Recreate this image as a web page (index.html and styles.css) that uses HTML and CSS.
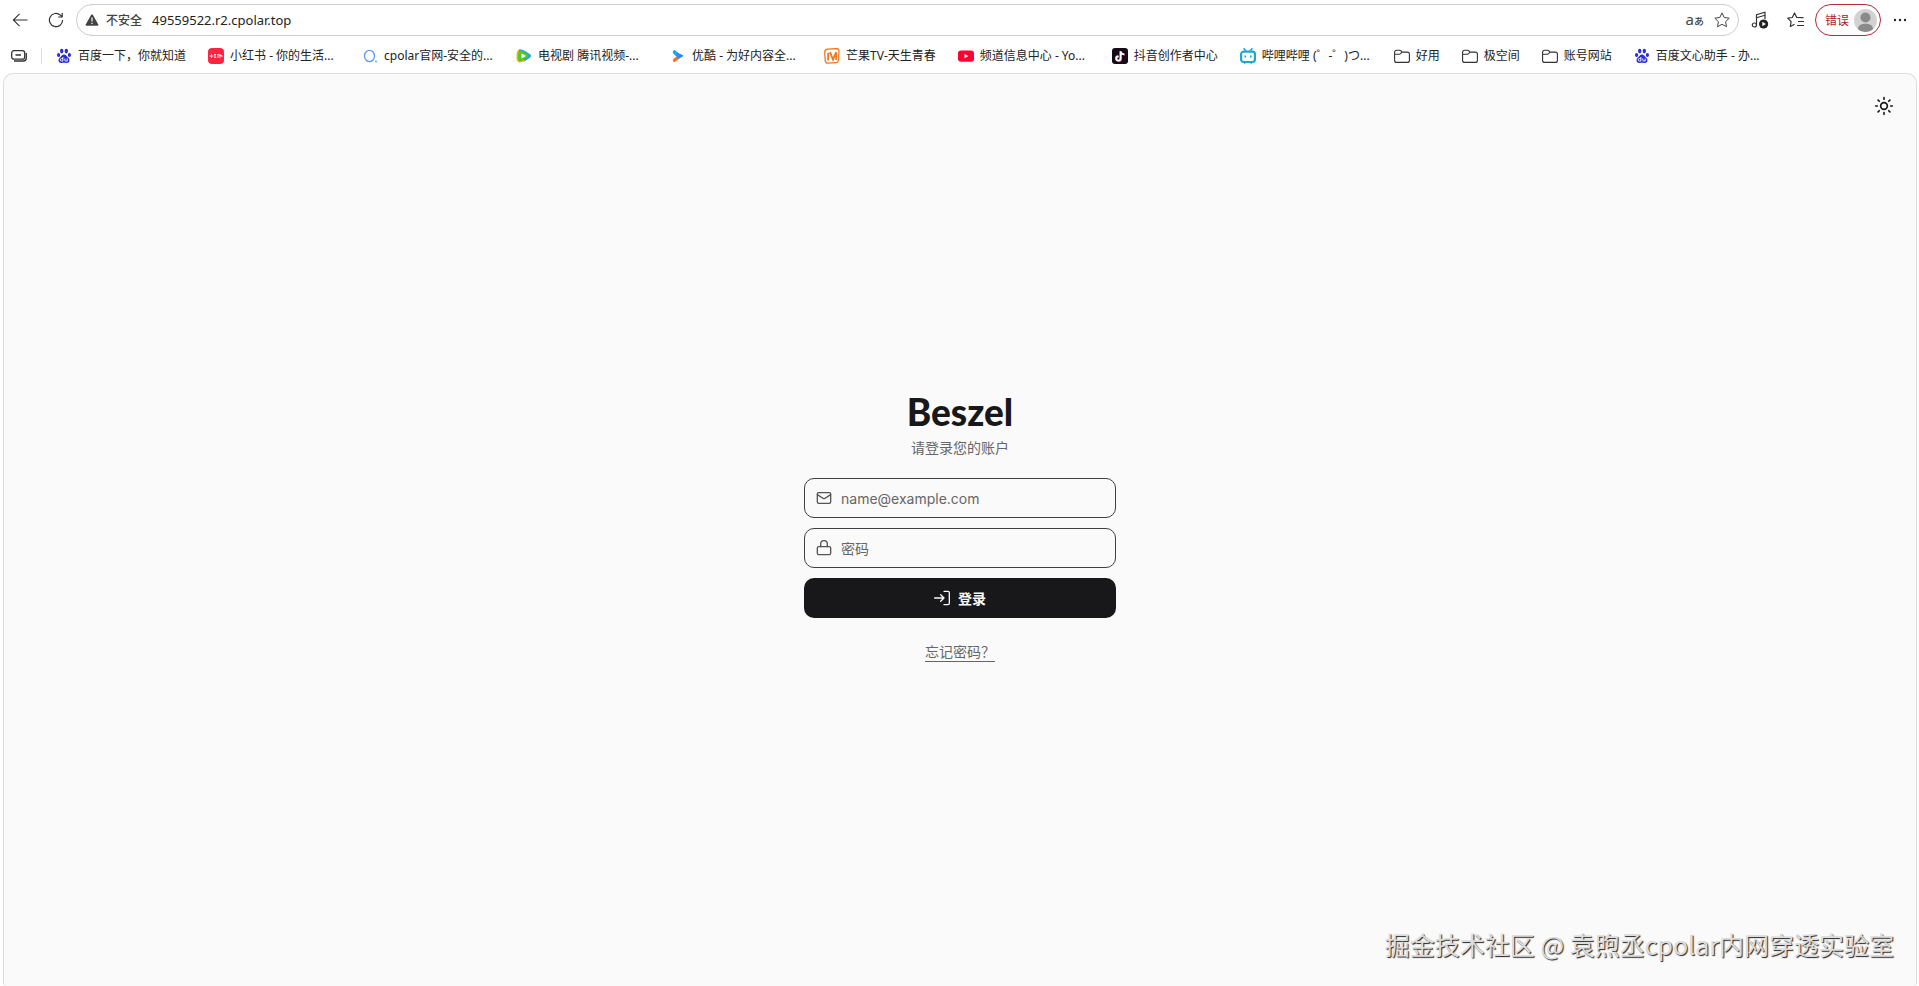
FILE: index.html
```html
<!DOCTYPE html>
<html lang="zh-CN">
<head>
  <meta charset="UTF-8">
  <meta name="viewport" content="width=device-width, initial-scale=1">
  <title>Beszel - 登录</title>
  <link rel="stylesheet" href="styles.css">
</head>
<body>
  <!-- Shared icons -->
  <svg class="sprite" aria-hidden="true">
    <symbol id="icon-paw" viewBox="0 0 16 16">
      <g fill="#2a2ed8">
        <ellipse cx="5.7" cy="3.1" rx="1.7" ry="2.3"/>
        <ellipse cx="10.3" cy="3.1" rx="1.7" ry="2.3"/>
        <ellipse cx="2.6" cy="6.9" rx="1.6" ry="2"/>
        <ellipse cx="13.4" cy="6.9" rx="1.6" ry="2"/>
        <path d="M8 6.4c-2 0-2.500 1.800-4 3.100-1.300 1.100-1.700 2.200-1.400 3.500.4 1.700 1.800 2.100 3.200 1.900 1.500-.2 2.900-.2 4.400 0 1.400.2 2.800-.2 3.200-1.900.3-1.300-.1-2.400-1.400-3.500-1.500-1.300-2-3.100-4-3.100z"/>
      </g>
      <path d="M6.900 9v4H5.500a1.200 1.200 0 0 1 0-2.500h1.400M8.800 10.500v1.600q0 .9.900.9h1.500v-2.500" fill="none" stroke="#fff" stroke-width=".9"/>
    </symbol>
    <symbol id="icon-folder" viewBox="0 0 16 16">
      <path d="M.6 4.200a2 2 0 0 1 2-2h2.900c.5 0 .8.200 1.200.5l1.400 1.400h5.300a2 2 0 0 1 2 2v6.300a2 2 0 0 1-2 2H2.600a2 2 0 0 1-2-2zM.6 6.200h4.900c.5 0 .8-.2 1.100-.5L8.100 4.100" fill="none" stroke="#333" stroke-width="1.100"/>
    </symbol>
  </svg>

  <header class="browser">
    <div class="toolbar">
      <button class="tool-button" aria-label="返回">
        <svg width="16" height="16" viewBox="0 0 18 18"><path d="M17.500 9H1.500M8.500 2L1.500 9l7 7" fill="none" stroke="#333" stroke-width="1.200"/></svg>
      </button>
      <button class="tool-button" aria-label="刷新">
        <svg width="16" height="16" viewBox="0 0 16 16"><path d="M14.600 8A6.600 6.600 0 1 1 12.400 3.100L14.200 4.800M14.200 1v4h-4" fill="none" stroke="#333" stroke-width="1.200"/></svg>
      </button>
      <div class="address-bar">
        <svg width="14" height="12" viewBox="0 0 14 12"><path d="M6.200.7Q7-.4 7.800.7l5.500 9.700q.5 1.300-.8 1.300h-11q-1.300 0-.8-1.300z" fill="#444"/><path d="M7 3.500v4M7 8.800V10" stroke="#fff" stroke-width="1.200"/></svg>
        <span class="insecure">不安全</span>
        <input class="url" type="text" aria-label="地址" value="49559522.r2.cpolar.top">
        <button class="tool-button translate" aria-label="翻译"><span>a</span><small>あ</small></button>
        <button class="tool-button" aria-label="收藏">
          <svg width="16" height="16" viewBox="0 0 16 16"><path d="M8 .9l2.200 4.600 5 .7-3.600 3.500.9 5L8 12.300l-4.500 2.400.9-5L.8 6.200l5-.7z" fill="none" stroke="#444" stroke-linejoin="round"/></svg>
        </button>
      </div>
      <button class="tool-button" aria-label="媒体">
        <svg width="18" height="18" viewBox="0 0 18 18"><path d="M5.500 14V3.800L14 1.200V8M5.500 6.800L14 4.200" fill="none" stroke="#333" stroke-width="1.200"/><ellipse cx="3.400" cy="14" rx="2.100" ry="2" fill="none" stroke="#333" stroke-width="1.200"/><circle cx="12.600" cy="13" r="4.600" fill="#222"/><path d="M11.300 10.800v4.400l3.600-2.200z" fill="#fff"/></svg>
      </button>
      <button class="tool-button" aria-label="收藏夹">
        <svg width="18" height="16" viewBox="0 0 18 16"><path d="M16.500 5.600L9.700 5.500 7.500 1 5.300 5.500l-4.600.7 3.400 3.400-.8 4.900 4.200-2.200M11 9.500h6M10 13.500h7" fill="none" stroke="#333" stroke-width="1.200" stroke-linejoin="round"/></svg>
      </button>
      <button class="profile">
        <span>错误</span>
        <svg width="23" height="23" viewBox="0 0 23 23"><circle cx="11.500" cy="11.500" r="11.500" fill="#d2d2d2"/><circle cx="11.500" cy="8.500" r="5" fill="#8a8a8a"/><path d="M4 20.200c0-3.700 3.300-5.400 7.500-5.400s7.500 1.700 7.500 5.400a11.500 11.500 0 0 1-15 0z" fill="#8a8a8a"/></svg>
      </button>
      <button class="tool-button" aria-label="设置及其他">
        <svg width="14" height="4" viewBox="0 0 14 4"><g fill="#222"><circle cx="2" cy="2" r="1.200"/><circle cx="7" cy="2" r="1.200"/><circle cx="12" cy="2" r="1.200"/></g></svg>
      </button>
    </div>

    <nav class="bookmarks">
      <button class="tool-button workspaces" aria-label="工作区">
        <svg width="16" height="12" viewBox="0 0 16 12"><rect x=".7" y=".7" width="13" height="8.400" rx="2.200" fill="none" stroke="#333" stroke-width="1.300"/><path d="M4.500 5h5.500M3 11h9.500q2.800 0 2.800-3V3" fill="none" stroke="#333" stroke-width="1.300"/></svg>
      </button>
      <a class="bookmark" href="#"><svg viewBox="0 0 16 16"><use href="#icon-paw"/></svg><span>百度一下，你就知道</span></a>
      <a class="bookmark long" href="#">
        <svg viewBox="0 0 16 16"><rect width="16" height="16" rx="4" fill="#ff2442"/><path d="M3.500 6v4M2.300 7.200v1.600M4.700 7.200v1.600M6 6.500h2M7 6.500v3M6 9.500h2.200M9 6.500h2M10 6v4M12 6v4M11.500 7.500H14V9" fill="none" stroke="#fff" stroke-width=".8"/></svg>
        <span>小红书 - 你的生活...</span>
      </a>
      <a class="bookmark long" href="#">
        <svg viewBox="0 0 16 16"><ellipse cx="7.500" cy="8" rx="5" ry="5.700" fill="none" stroke="#5b9df0" stroke-width="1.300"/><circle cx="14" cy="13.500" r=".9" fill="#5b9df0"/></svg>
        <span>cpolar官网-安全的...</span>
      </a>
      <a class="bookmark long" href="#">
        <svg viewBox="0 0 16 16"><path d="M3 1.400Q5 .8 9 3l5 3.200q2.200 1.800 0 3.500L8 13.800 3 8z" fill="#1ca3f4"/><path d="M3 1.400Q.8 2 .5 7.500T2.500 14q1 1.500 6.500-1.300L4.500 8z" fill="#ffa51f"/><path d="M3.400 2.800Q4.500 2 8.500 4.300t4 2.700q1 .9-.3 1.800Q5 14 3.400 13.200T2 8t1.400-5.200z" fill="#52c91e"/><path d="M5.500 5.200v5.400L10 8z" fill="#fff"/></svg>
        <span>电视剧 腾讯视频-...</span>
      </a>
      <a class="bookmark long" href="#">
        <svg viewBox="0 0 16 16"><path d="M4.500 4l3 3.200" stroke="#18a9f5" stroke-width="3.600" stroke-linecap="round"/><path d="M4.500 12.200L8 9.500" stroke="#ff6b24" stroke-width="3.300" stroke-linecap="round"/><path d="M6.500 4.300L12.700 7q.9.700 0 1.400l-4 2.600Q6 8 6.500 4.300z" fill="#248ff5"/></svg>
        <span>优酷 - 为好内容全...</span>
      </a>
      <a class="bookmark" href="#">
        <svg viewBox="0 0 16 16"><path d="M4 1.200L12.500.5q2.500 0 2.500 2.500l-.5 9q-.3 2.500-2.700 2.600L4 15.200q-2.500 0-2.800-2.500L.7 4Q.7 1.500 4 1.200z" fill="#fff" stroke="#f17922" stroke-width="1.300"/><path d="M4.200 12.500V4.700M6 4.200l3 7.300 3.200-7.300v7.800" fill="none" stroke="#f17922" stroke-width="1.900"/></svg>
        <span>芒果TV-天生青春</span>
      </a>
      <a class="bookmark long" href="#">
        <svg viewBox="0 0 16 16"><rect y="2.400" width="16" height="11.400" rx="3" fill="#ff0033"/><path d="M6.500 5.900v4.400L10.300 8.100z" fill="#fff"/></svg>
        <span>频道信息中心 - Yo...</span>
      </a>
      <a class="bookmark" href="#">
        <svg viewBox="0 0 16 16"><rect width="16" height="16" rx="3" fill="#170b1a"/><g fill="none" stroke-width="1.600"><path d="M8.200 3v7.200a2.200 2.200 0 1 1-2.200-2.200M8.200 3q.4 2.800 3.600 3" stroke="#25f4ee"/><path d="M9.200 3.800V11a2.200 2.200 0 1 1-2.200-2.200M9.200 3.800q.4 2.800 3.600 3" stroke="#fe2c55"/><path d="M8.700 3.400v7.200a2.200 2.200 0 1 1-2.200-2.200M8.700 3.400q.4 2.800 3.600 3" stroke="#fff"/></g></svg>
        <span>抖音创作者中心</span>
      </a>
      <a class="bookmark long" href="#">
        <svg viewBox="0 0 16 16"><path d="M4 .8l2.200 2.500M12 .8L9.800 3.300" stroke="#20a6d0" stroke-width="1.600" stroke-linecap="round"/><rect x="1.100" y="3.700" width="13.800" height="10.300" rx="2.400" fill="#fff" stroke="#20a6d0" stroke-width="2.200"/><path d="M5.200 7.500v2M10.800 7.500v2M4 15h1.500M10.500 15H12" stroke="#20a6d0" stroke-width="1.600"/></svg>
        <span>哔哩哔哩 (゜-゜)つ...</span>
      </a>
      <a class="bookmark" href="#"><svg viewBox="0 0 16 16"><use href="#icon-folder"/></svg><span>好用</span></a>
      <a class="bookmark" href="#"><svg viewBox="0 0 16 16"><use href="#icon-folder"/></svg><span>极空间</span></a>
      <a class="bookmark" href="#"><svg viewBox="0 0 16 16"><use href="#icon-folder"/></svg><span>账号网站</span></a>
      <a class="bookmark long" href="#"><svg viewBox="0 0 16 16"><use href="#icon-paw"/></svg><span>百度文心助手 - 办...</span></a>
    </nav>
  </header>

  <main class="page">
    <button class="theme-toggle" aria-label="切换主题">
      <svg width="20" height="20" viewBox="0 0 24 24" fill="none" stroke="#18181b" stroke-width="2" stroke-linecap="round"><circle cx="12" cy="12" r="4"/><path d="M12 2v2M12 20v2M4.930 4.930l1.410 1.410M17.660 17.660l1.410 1.410M2 12h2M20 12h2M6.340 17.660l-1.410 1.410M19.070 4.930l-1.410 1.410"/></svg>
    </button>

    <div class="login">
      <h1>Beszel</h1>
      <p class="subtitle">请登录您的账户</p>
      <form class="login-form">
        <label class="field">
          <svg width="16" height="16" viewBox="0 0 24 24" fill="none" stroke="currentColor" stroke-width="2" stroke-linecap="round" stroke-linejoin="round"><rect x="2" y="4" width="20" height="16" rx="2"/><path d="M22 7l-8.970 5.700a1.940 1.940 0 0 1-2.060 0L2 7"/></svg>
          <input type="email" name="email" placeholder="name@example.com" aria-label="邮箱">
        </label>
        <label class="field">
          <svg width="16" height="16" viewBox="0 0 24 24" fill="none" stroke="currentColor" stroke-width="2" stroke-linecap="round" stroke-linejoin="round"><rect x="2" y="10" width="20" height="12" rx="2"/><path d="M7 10V6a5 5 0 0 1 10 0v4"/></svg>
          <input type="password" name="password" placeholder="密码" aria-label="密码">
        </label>
        <button class="submit" type="submit">
          <svg width="16" height="16" viewBox="0 0 24 24" fill="none" stroke="currentColor" stroke-width="2" stroke-linecap="round" stroke-linejoin="round"><path d="M15 2h6a2 2 0 0 1 2 2v16a2 2 0 0 1-2 2h-6M10 17l5-5-5-5M15 12H1"/></svg>
          <span>登录</span>
        </button>
      </form>
      <a class="forgot" href="#">忘记密码？</a>
    </div>

    <p class="watermark">掘金技术社区 @ 袁煦丞cpolar内网穿透实验室</p>
  </main>
</body>
</html>
```
FILE: styles.css
```css
* {
  box-sizing: border-box;
}

body {
  margin: 0;
  min-height: 100vh;
  display: flex;
  flex-direction: column;
  background-color: #fff;
  color: #222;
  font-family: "Noto Sans", "Noto Sans CJK SC", sans-serif;
  font-size: 12px;
}

button,
input {
  font: inherit;
  color: inherit;
  border: none;
  background: none;
  padding: 0;
  margin: 0;
}

button {
  cursor: pointer;
}

svg {
  display: block;
  flex-shrink: 0;
}

.sprite {
  position: absolute;
  width: 0;
  height: 0;
}

/* Browser bars */
.toolbar {
  display: flex;
  align-items: center;
  gap: 18px;
  padding: 4px 12px 0;
}

.tool-button {
  display: flex;
  align-items: center;
  justify-content: center;
}

.toolbar > .tool-button:nth-child(2) {
  margin-left: 2px;
}

.address-bar {
  flex: 1;
  display: flex;
  align-items: center;
  height: 32px;
  margin: 0 -6px;
  padding: 0 8px;
  border: 1px solid #ccc;
  border-radius: 16px;
}

.insecure {
  margin: 0 10px 0 7px;
  color: #444;
  font-weight: 500;
}

.url {
  flex: 1;
  min-width: 0;
  font-size: 13px;
}

.translate {
  margin-right: 10px;
  align-items: baseline;
  color: #444;
  font-size: 15px;
  line-height: 16px;
}

.translate small {
  font-family: "Noto Sans CJK JP", sans-serif;
  font-size: 10px;
  font-weight: 500;
}

.profile {
  display: flex;
  align-items: center;
  gap: 5px;
  height: 32px;
  margin: 0 -6px 0 -8px;
  padding: 0 3px 0 9px;
  border: 1px solid #b02a37;
  border-radius: 16px;
  color: #b0202f;
}

.bookmarks {
  display: flex;
  align-items: center;
  gap: 22px;
  height: 37px;
  padding: 2px 0 0 11px;
  overflow: hidden;
}

.workspaces {
  height: 16px;
  padding-right: 14px;
  margin-right: -8px;
  border-right: 1px solid #ddd;
}

.bookmark {
  display: flex;
  align-items: center;
  gap: 6px;
  color: #222;
  line-height: 16px;
  text-decoration: none;
  white-space: nowrap;
}

.bookmark svg {
  width: 16px;
  height: 16px;
}

.long span {
  width: 110px;
}

/* Login page */
.page {
  position: relative;
  flex: 1;
  display: flex;
  align-items: center;
  justify-content: center;
  margin: 0 2px 0 3px;
  padding-bottom: 4px;
  border: 1px solid #ddd;
  border-bottom: none;
  border-radius: 10px 10px 4px 4px;
  background-color: #fafafa;
  color: #18181b;
  font-family: Inter, "Noto Sans CJK SC", sans-serif;
  font-size: 14px;
}

.theme-toggle {
  position: absolute;
  top: 12px;
  right: 12px;
  display: flex;
  align-items: center;
  justify-content: center;
  width: 40px;
  height: 40px;
}

.login {
  display: flex;
  flex-direction: column;
  align-items: center;
  width: 312px;
}

h1 {
  margin: 0 0 8px;
  font-family: Lato, sans-serif;
  font-size: 37px;
  font-weight: 900;
  line-height: 36px;
}

.subtitle {
  margin: 0 0 20px;
  color: #666;
  line-height: 20px;
}

.login-form {
  display: flex;
  flex-direction: column;
  gap: 10px;
  width: 100%;
}

.field {
  display: flex;
  align-items: center;
  gap: 9px;
  height: 40px;
  padding: 0 11px;
  border: 1px solid #3f3f46;
  border-radius: 10px;
  color: #555;
}

.field input {
  flex: 1;
  min-width: 0;
  outline: none;
}

.field input::placeholder {
  color: #666;
  opacity: 1;
}

.submit {
  display: flex;
  align-items: center;
  justify-content: center;
  gap: 8px;
  height: 40px;
  border-radius: 10px;
  background-color: #18181b;
  color: #fafafa;
  font-weight: 700;
}

.forgot {
  margin-top: 24px;
  color: #666;
  line-height: 20px;
  text-decoration: underline;
  text-underline-offset: 4px;
}

.watermark {
  position: absolute;
  right: 22px;
  bottom: 24px;
  margin: 0;
  color: #ddd;
  font-family: "Noto Sans CJK SC", sans-serif;
  font-size: 25px;
  text-shadow: 1px 1px 1px #222;
}
```
